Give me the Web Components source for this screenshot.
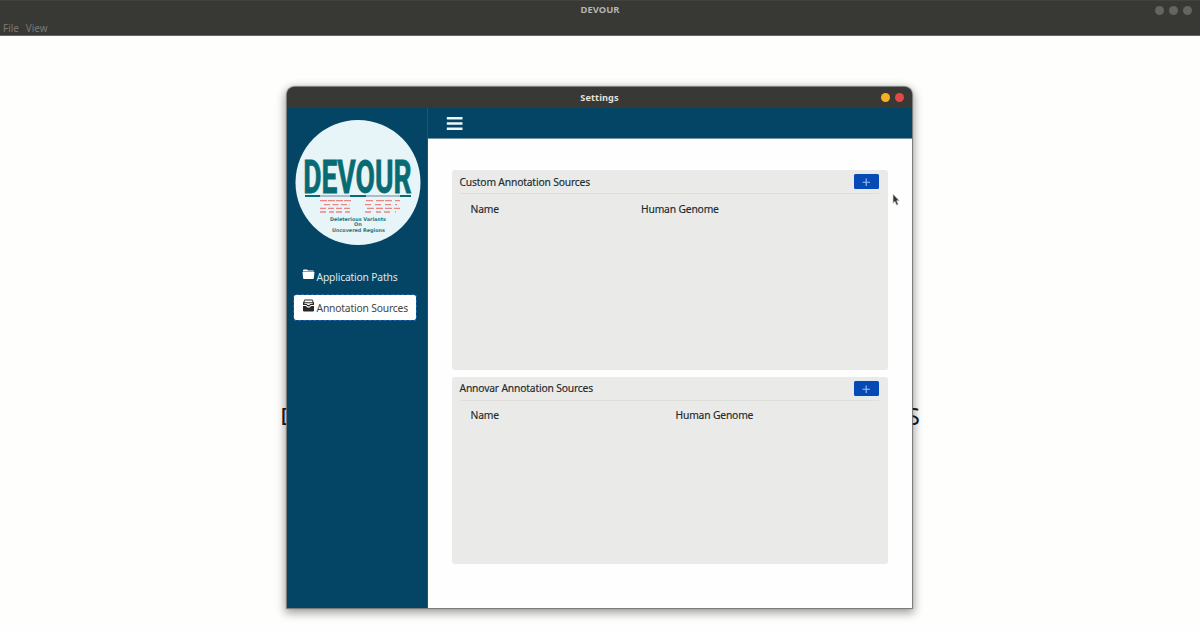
<!DOCTYPE html>
<html lang="en">
<head>
<meta charset="utf-8">
<title>DEVOUR</title>
<style>
html,body{margin:0;height:100%;overflow:hidden;background:#fefefd;font-family:"Noto Sans","Open Sans",sans-serif}
</style>
</head>
<body>
<devour-app></devour-app>
<script>
const define = (name, html) => customElements.define(name, class extends HTMLElement {
  constructor() {
    super();
    const t = document.createElement('template');
    t.innerHTML = html;
    this.attachShadow({mode: 'open'}).append(t.content.cloneNode(true));
  }
});

define('devour-logo', `
<style>:host{display:block;width:126px;height:126px}svg{display:block;overflow:visible}</style>
<svg width="126" height="126" viewBox="0 0 126 126">
  <circle cx="63" cy="62.5" r="62.5" fill="#e8f5f8"/>
  <text transform="translate(8.2 72.5) scale(.616 1)" font-family="Roboto" font-weight="700" font-size="46.5" textLength="176" lengthAdjust="spacingAndGlyphs" fill="#086b74" stroke="#086b74" stroke-width=".8">DEVOUR</text>
  <path d="M10 76H116" stroke="#8fabb8" stroke-width="1.6"/>
  <path d="M10 76H25M55 76H71M105 76H116" stroke="#086b74" stroke-width="2.2"/>
  <g stroke="#e98683" stroke-width="1.3" fill="none">
    <path d="M25 80.7H56" stroke-dasharray="7 1"/><path d="M29 84.6H55" stroke-dasharray="6 2.5"/>
    <path d="M25 88.3H56" stroke-dasharray="6 2"/><path d="M25 92H56" stroke-dasharray="6 3 5 2"/>
    <path d="M71 80.7H105" stroke-dasharray="7 3 8 1"/><path d="M70 84.6H102" stroke-dasharray="6 4"/>
    <path d="M72 88.3H105" stroke-dasharray="7 2"/><path d="M70 92H101" stroke-dasharray="6 5 5 3"/>
  </g>
  <g font-family="DejaVu Sans" font-weight="700" font-size="5" fill="#28777f" text-anchor="middle">
    <text x="63" y="100.5" textLength="56" lengthAdjust="spacingAndGlyphs">Deleterious Variants</text>
    <text x="63" y="106.3">On</text>
    <text x="63.5" y="112" textLength="53" lengthAdjust="spacingAndGlyphs">Uncovered Regions</text>
  </g>
</svg>`);

define('nav-entry', `
<style>
:host{display:flex;align-items:center;box-sizing:border-box;width:124px;height:27px;padding:0 0 0 8px;border-radius:3px;font-size:10.3px;letter-spacing:-.18px;color:#dce8ed;border:1px solid transparent}
:host([active]){background:#fefefe;background-clip:padding-box;color:#444;border:1px dashed #2064ad}
::slotted(svg){display:block;flex:none;margin:-5px 2px 0 -.5px}
span{white-space:nowrap}
</style><slot name="icon"></slot><span><slot></slot></span>`);

define('add-button', `
<style>:host{display:block;width:25px;height:15px;background:#064bb5;border-radius:1.5px;box-shadow:0 0 1px 1px #dfeaf0}svg{display:block}</style>
<svg width="25" height="15" viewBox="0 0 25 15"><path d="M8.5 8.3H16M12.2 4.5V12" stroke="#9cc3ec" stroke-width="1.1"/></svg>`);

define('source-card', `
<style>
:host{display:block;box-sizing:border-box;background:#eaeae9;border-radius:3px;padding:0 9px 0 7.5px;font-size:10.3px;letter-spacing:-.17px;color:#222b2d;-webkit-text-stroke:.15px #222b2d}
header{display:flex;justify-content:space-between;align-items:center;height:24px;border-bottom:1px solid #dededd;box-sizing:border-box}
.row{display:flex;height:29px;align-items:center;padding-left:11px}
.name{width:var(--name-width)}
</style>
<header><slot name="title"></slot><add-button></add-button></header>
<div class="row"><span class="name">Name</span><span>Human Genome</span></div>`);

define('settings-window', `
<style>
:host{display:flex;flex-direction:column;box-sizing:border-box;width:625px;height:521px;border-radius:8px 8px 0 0;overflow:hidden;box-shadow:0 0 1px .7px #777,0 3px 10px 2px rgba(0,0,0,.38);background:#044464}
.title{display:grid;grid-template-columns:1fr auto 1fr;align-items:center;height:21px;background:#383835;color:#e2e2df;font:700 9.2px "Noto Sans",sans-serif;letter-spacing:.1px}
.dots{display:flex;gap:5px;justify-content:flex-end;padding-right:8px}
i{width:9px;height:9px;border-radius:50%;background:#f5b121}i+i{background:#e34849}
.body{display:flex;flex:1;min-height:0}
aside{width:141px;box-sizing:border-box;padding:12px 0 0 6px;border-right:1px solid #1c5775}
devour-logo{margin:0 0 17px 2px}
nav-entry+nav-entry{margin-top:4px}
.right{flex:1;display:flex;flex-direction:column}
.bar{box-sizing:border-box;padding:8px 0 0 18px;border-bottom:1px solid #7196a7;flex:none;height:31px}
.bar svg{display:block}
main{flex:1;background:#fefefe;padding:31px 24px 0 24px}
source-card:first-child{height:200px;--name-width:170.5px}
source-card+source-card{height:187px;margin-top:6.5px;--name-width:205px}
</style>
<div class="title"><span></span><span>Settings</span><div class="dots"><i></i><i></i></div></div>
<div class="body">
 <aside><devour-logo></devour-logo>
  <nav-entry><svg slot="icon" width="13" height="11" viewBox="0 0 13 11"><path d="M1 1.5Q1 .5 2 .5H5L6.3 1.5H11Q12 1.5 12 2.5H1Z" fill="#fff"/><path d="M.5 3.1H12.5L11.8 9.2Q11.7 10 11 10H2Q1.2 10 1.1 9.2Z" fill="#fff"/></svg>Application Paths</nav-entry>
  <nav-entry active><svg slot="icon" width="13" height="13" viewBox="0 0 13 13"><path d="M2.6 .5H10.4L12 3.8V6H8.5Q8.3 7.4 6.5 7.4T4.5 6H1V3.8ZM3 1.6 2.3 3.2H10.7L10 1.6ZM2.4 4.2V4.9H5Q5.3 6.1 6.5 6.1T8 4.9H10.6V4.2Z" fill="#282828" fill-rule="evenodd"/><path d="M1 7H4Q4.6 8.7 6.5 8.7T9 7H12V11.4Q12 12.5 11 12.5H2Q1 12.5 1 11.4Z" fill="#282828"/></svg>Annotation Sources</nav-entry>
 </aside>
 <div class="right">
  <div class="bar"><svg width="18" height="15" viewBox="0 0 18 15"><path d="M.8 2.2H16.5M.8 7.5H16.5M.8 12.8H16.5" stroke="#eef7fb" stroke-width="2.5"/></svg></div>
  <main>
   <source-card><span slot="title">Custom Annotation Sources</span></source-card>
   <source-card><span slot="title">Annovar Annotation Sources</span></source-card>
  </main>
 </div>
</div>`);

define('top-bar', `
<style>
:host{display:block;height:36px;box-sizing:border-box;background:#383835;border-bottom:1px solid #696763;border-top:1px solid #42423f}
.t{display:grid;grid-template-columns:1fr auto 1fr;height:18px;align-items:center;font:700 9.4px "Noto Sans",sans-serif;color:#b4b4b0}
.t>span{margin-top:-1px}
.d{display:flex;justify-content:flex-end;gap:5px;padding-right:8px}
i{width:9px;height:9px;border-radius:50%;background:#646461}
.m{display:flex;gap:7px;padding-left:3px;font-size:9.9px;line-height:18px;color:#7d7a76}
</style>
<div class="t"><span></span><span>DEVOUR</span><div class="d"><i></i><i></i><i></i></div></div>
<div class="m"><span>File</span><span>View</span></div>`);

define('devour-app', `
<style>
:host{display:block;position:relative;width:1200px;height:630px}
.heading{display:flex;justify-content:space-between;width:640px;margin:363px auto 0;font-size:24px;line-height:34px;color:#1c1c1c}
settings-window{position:absolute;left:287px;top:87px}
.cursor{position:absolute;left:892px;top:193px}
</style>
<top-bar></top-bar>
<div class="heading"><span>D</span><span>S</span></div>
<settings-window></settings-window>
<svg class="cursor" width="9" height="14" viewBox="0 0 9 14"><path d="M1 1V10.3L3 8.4 4.6 12.2 6.3 11.4 4.7 7.8H7.3Z" fill="#333" stroke="#d8d8d8" stroke-width=".7"/></svg>`);
</script>
</body>
</html>
